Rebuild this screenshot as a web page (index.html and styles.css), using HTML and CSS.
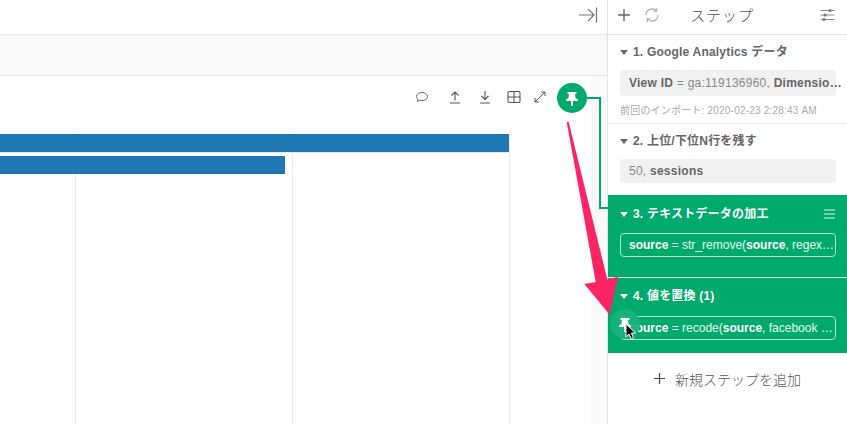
FILE: index.html
```html
<!DOCTYPE html>
<html lang="ja">
<head>
<meta charset="utf-8">
<title>ステップ</title>
<link rel="stylesheet" href="styles.css">
</head>
<body>
<div class="app">
  <main class="main">
    <div class="topbar">
      <svg class="collapse" width="20" height="16" viewBox="0 0 20 16"><path d="M1 8h15M10 2l6 6-6 6M18.500 0.500v15" fill="none" stroke="#777" stroke-width="1.200"/></svg>
    </div>
    <div class="band"></div>
    <div class="content">
      <section class="panel">
        <div class="tools">
          <svg class="tool t-comment" width="14" height="14" viewBox="0 0 14 14"><path d="M7 2.500c3 0 5.500 1.500 5.500 4s-2.500 4-5.500 4c-.8 0-1.500-.1-2.200-.3L2.500 11.500l.5-2.300C2 8.500 1.500 7.600 1.500 6.500c0-2.500 2.500-4 5.500-4z" fill="none" stroke="#666" stroke-width="1"/></svg>
          <svg class="tool t-up" width="14" height="14" viewBox="0 0 14 14"><path d="M7 10.500V2M3.500 5.500L7 2l3.500 3.500M2 13h10" fill="none" stroke="#555" stroke-width="1.100"/></svg>
          <svg class="tool t-down" width="14" height="14" viewBox="0 0 14 14"><path d="M7 1v8.500M3.500 6L7 9.500 10.500 6M2 13h10" fill="none" stroke="#555" stroke-width="1.100"/></svg>
          <svg class="tool t-table" width="14" height="14" viewBox="0 0 14 14"><rect x="1" y="1.500" width="12" height="11" rx="1.500" fill="none" stroke="#555" stroke-width="1.100"/><path d="M7 1.500v11M1 7h12" stroke="#555" stroke-width="1.100"/></svg>
          <svg class="tool t-expand" width="14" height="14" viewBox="0 0 14 14"><path d="M2 12L12 2M8 2h4v4M2 8v4h4" fill="none" stroke="#555" stroke-width="1"/></svg>
        </div>
        <div class="chart">
          <div class="grid-h"></div>
          <div class="grid-v g1"></div>
          <div class="grid-v g2"></div>
          <div class="grid-v g3"></div>
          <div class="bar bar-long"></div>
          <div class="bar bar-short"></div>
        </div>
      </section>
      <div class="strip"></div>
    </div>
  </main>
  <aside class="side">
    <header class="side-head">
      <svg class="plus" width="14" height="14" viewBox="0 0 14 14"><path d="M7 1v12M1 7h12" stroke="#666" stroke-width="1.400"/></svg>
      <svg class="refresh" width="16" height="16" viewBox="0 0 16 16"><path d="M2 8a6 6 0 0 1 10.500-4M14 8a6 6 0 0 1-10.500 4M12.800 1v3.300H9.500M3.200 15v-3.300h3.300" fill="none" stroke="#aaa" stroke-width="1.100"/></svg>
      <span class="side-title">ステップ</span>
      <svg class="sliders" width="15" height="14" viewBox="0 0 15 14"><path d="M0.500 2.500h14M0.500 7h14M0.500 11.500h14" stroke="#888" stroke-width="1"/><circle cx="10" cy="2.500" r="1.500" fill="#777"/><circle cx="5" cy="7" r="1.500" fill="#777"/><circle cx="4" cy="11.500" r="1.500" fill="#777"/></svg>
    </header>
    <section class="step s1">
      <h3 class="step-title"><i class="caret"></i>1. Google Analytics データ</h3>
      <div class="chip"><b>View ID</b> = ga:119136960, <b>Dimensio…</b></div>
      <p class="note">前回のインポート: 2020-02-23 2:28:43 AM</p>
    </section>
    <section class="step s2">
      <h3 class="step-title"><i class="caret"></i>2. 上位/下位N行を残す</h3>
      <div class="chip">50, <b>sessions</b></div>
    </section>
    <section class="step active s3">
      <h3 class="step-title"><i class="caret"></i>3. テキストデータの加工<svg class="menu" width="11" height="10" viewBox="0 0 11 10"><path d="M0 1h11M0 5h11M0 9h11" stroke="#dff3ea" stroke-width="1"/></svg></h3>
      <div class="chip"><b>source</b> = str_remove(<b>source</b>, regex…</div>
    </section>
    <section class="step active s4">
      <h3 class="step-title"><i class="caret"></i>4. 値を置換 (1)</h3>
      <div class="chip"><b>source</b> = recode(<b>source</b>, facebook …</div>
    </section>
    <div class="add"><svg width="11" height="11" viewBox="0 0 11 11"><path d="M5.500 0v11M0 5.500h11" stroke="#444" stroke-width="1.200"/></svg><span>新規ステップを追加</span></div>
  </aside>
  <svg class="connector" width="847" height="424" viewBox="0 0 847 424">
    <path d="M587 98h13v110H608" fill="none" stroke="#00aa6c" stroke-width="2"/>
    <path d="M566.700 122L568.700 122L607.300 279.300L618.300 276.700L609.500 314.500L584.300 284L595.700 282Z" fill="#fb2566"/>
  </svg>
  <div class="pin pin-big"><svg width="14" height="15" viewBox="0 0 14 15"><path d="M2.500 1h9v1.800L10 3.300l.6 3.700 2.400 1.600V10H8v4.500L7 15l-1-.5V10H1V8.600L3.400 7 4 3.300 2.500 2.800z" fill="#fff"/></svg></div>
  <div class="pin pin-ghost"><svg width="14" height="15" viewBox="0 0 14 15"><path d="M2.500 1h9v1.800L10 3.300l.6 3.700 2.400 1.600V10H8v4.500L7 15l-1-.5V10H1V8.600L3.400 7 4 3.300 2.500 2.800z" fill="#fff"/></svg></div>
  <svg class="cursor" width="12" height="18" viewBox="0 0 12 18"><path d="M1 1v13l3-3 2 5 2.500-1-2-5H10.500z" fill="#111" stroke="#fff" stroke-width="1"/></svg>
</div>
</body>
</html>
```
FILE: styles.css
```css
* { box-sizing: border-box; }
html, body { margin: 0; height: 100%; overflow: hidden; background: #fff; }
body { font-family: "Liberation Sans", "Noto Sans CJK JP", sans-serif; color: #555; }
.app { position: relative; display: flex; width: 847px; height: 424px; overflow: hidden; }
.main { width: 608px; flex: none; border-right: 1px solid #e4e4e4; display: flex; flex-direction: column; }
.topbar { height: 35px; flex: none; border-bottom: 1px solid #e6e6e6; display: flex; align-items: center; justify-content: flex-end; padding: 0 9px 4px 0; background: #fff; }
.band { height: 41px; flex: none; background: #f9f9f9; border-bottom: 1px solid #e6e6e6; }
.content { flex: 1; display: flex; min-height: 0; }
.panel { width: 591px; flex: none; background: #fff; display: flex; flex-direction: column; }
.strip { flex: 1; background: #fafafa; }
.tools { height: 56px; flex: none; position: relative; }
.tool { position: absolute; top: 14px; }
.t-comment { left: 415px; }
.t-up { left: 448px; }
.t-down { left: 478px; }
.t-table { left: 507px; }
.t-expand { left: 533px; }
.chart { position: relative; flex: 1; }
.grid-v { position: absolute; top: 0; bottom: 0; width: 1px; background: #ececec; }
.g1 { left: 75px; }
.g2 { left: 292px; }
.g3 { left: 509px; }
.grid-h { position: absolute; left: 0; width: 510px; top: 20px; height: 1px; background: #e6e6e6; }
.bar { position: relative; height: 17.500px; background: #1f77b4; }
.bar-long { width: 509px; margin-top: 2px; }
.bar-short { width: 285px; margin-top: 4.500px; }
.side { flex: 1; min-width: 0; display: flex; flex-direction: column; }
.side-head { height: 35px; flex: none; border-bottom: 1px solid #e6e6e6; display: flex; align-items: center; padding: 0 12px 5px 9px; }
.refresh { margin-left: 13px; }
.side-title { flex: 1; text-align: center; font-size: 15px; letter-spacing: .9px; color: #555; font-family: "Noto Sans CJK JP", sans-serif; font-weight: 300; padding-right: 36px; }
.step { padding: 8px 11px 0 12px; }
.s1 { height: 89px; border-bottom: 1px solid #e6e6e6; padding-top: 9px; }
.s2 { height: 71px; padding-top: 9px; }
.s3 { height: 83px; padding-top: 11px; border-bottom: 1px solid #e2f5ec; }
.s4 { height: 75px; padding-top: 10px; }
.step-title { position: relative; margin: 0; font-size: 12px; line-height: 16px; font-weight: 700; letter-spacing: .2px; color: #666; display: flex; align-items: center; white-space: nowrap; }
.caret { width: 0; height: 0; border: 4px solid transparent; border-top: 5px solid currentColor; border-bottom: 0; margin-right: 5px; flex: none; }
.chip { margin-top: 10px; height: 24px; line-height: 24px; padding: 0 4px 0 9px; border-radius: 4px; background: #f1f1f1; color: #888; font-size: 12px; letter-spacing: .25px; white-space: nowrap; }
.s1 .chip { height: 26px; line-height: 26px; }
.chip b { font-weight: 700; color: #666; }
.note { margin: 8px 0 0; font-size: 10px; line-height: 14px; letter-spacing: .2px; color: #aaa; white-space: nowrap; }
.active { background: #00aa6c; color: #fff; }
.active .step-title { color: #fff; }
.active .chip { margin-top: 12px; padding-left: 8px; background: transparent; border: 1px solid #b6e4d1; color: #eafaf3; line-height: 22px; letter-spacing: 0; }
.s3 .chip { margin-top: 11px; }
.active .chip b { color: #fff; }
.menu { position: absolute; right: 1px; top: 3px; }
.add { flex: 1; display: flex; align-items: center; justify-content: center; gap: 10px; padding-bottom: 20px; font-size: 14px; color: #555; font-family: "Noto Sans CJK JP", sans-serif; font-weight: 300; }
.connector { position: absolute; left: 0; top: 0; pointer-events: none; }
.pin { position: absolute; border-radius: 50%; display: flex; align-items: center; justify-content: center; }
.pin-big { left: 557px; top: 83px; width: 30px; height: 30px; background: #00aa6c; }
.pin-ghost { left: 610px; top: 309px; width: 30px; height: 30px; background: rgba(24, 178, 128, .93); }
.cursor { position: absolute; left: 625px; top: 323px; }
```
